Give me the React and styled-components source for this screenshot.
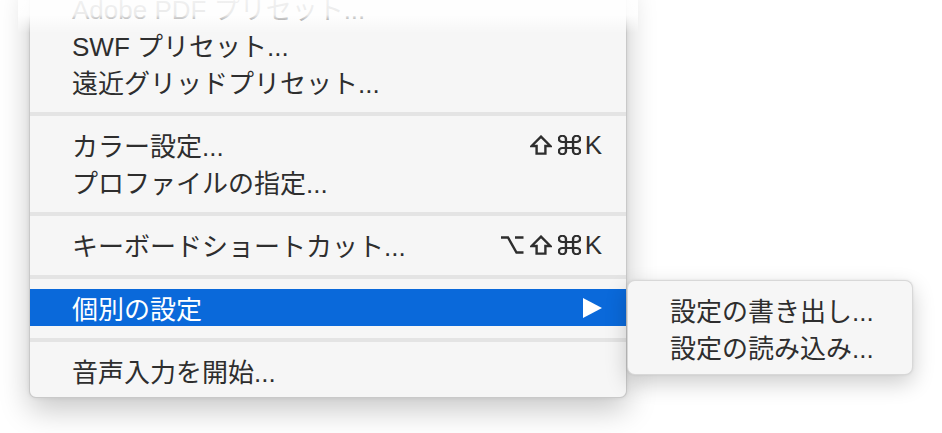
import React from "react";
import styled, { createGlobalStyle } from "styled-components";

const GlobalStyle = createGlobalStyle`
  html, body {
    margin: 0;
    padding: 0;
    background: #ffffff;
    overflow: hidden;
  }
  body {
    font-family: "Liberation Sans", "Noto Sans CJK JP", sans-serif;
  }
`;

// key glyphs drawn as small svgs so their size matches the mac menu font
const OptionKey = () => (
  <Glyph width="24" height="20" viewBox="0 0 24 20">
    <path d="M1 2.5H8L16.5 17.5H23.5M15 2.5H23.5" />
  </Glyph>
);

const ShiftKey = () => (
  <Glyph width="22" height="20" viewBox="0 0 22 20">
    <path d="M11 1.6L20.4 11H15.4V18.6H6.6V11H1.6Z" />
  </Glyph>
);

const CommandKey = () => (
  <Glyph width="23" height="20" viewBox="2.3 2.3 19.4 19.4" preserveAspectRatio="none">
    <path
      d="M15 6v12a3 3 0 1 0 3-3H6a3 3 0 1 0 3 3V6a3 3 0 1 0-3 3h12a3 3 0 1 0-3-3"
      strokeWidth="2"
    />
  </Glyph>
);

const glyphs = { opt: OptionKey, shift: ShiftKey, cmd: CommandKey };

const menuItems = [
  { label: "Adobe PDF プリセット..." },
  { label: "SWF プリセット..." },
  { label: "遠近グリッドプリセット..." },
  { separator: true },
  { label: "カラー設定...", keys: ["shift", "cmd", "K"] },
  { label: "プロファイルの指定..." },
  { separator: true },
  { label: "キーボードショートカット...", keys: ["opt", "shift", "cmd", "K"] },
  { separator: true },
  { label: "個別の設定", active: true, submenu: ["設定の書き出し...", "設定の読み込み..."] },
  { separator: true },
  { label: "音声入力を開始..." },
];

const App = () => {
  return (
    <>
      <GlobalStyle />
      <Stage>
        <Menu>
          {menuItems.map((item, i) =>
            item.separator ? (
              <Separator key={i} />
            ) : (
              <Item key={i} $active={item.active}>
                <Label>{item.label}</Label>
                {item.keys && (
                  <Keys>
                    {item.keys.map((k) => {
                      const G = glyphs[k];
                      return G ? <G key={k} /> : <Letter key={k}>{k}</Letter>;
                    })}
                  </Keys>
                )}
                {item.submenu && (
                  <>
                    <Arrow viewBox="0 0 19 20">
                      <polygon points="0,0 19,10 0,20" fill="#ffffff" />
                    </Arrow>
                    <SubMenu>
                      {item.submenu.map((s) => (
                        <SubItem key={s}>{s}</SubItem>
                      ))}
                    </SubMenu>
                  </>
                )}
              </Item>
            )
          )}
          <TopFade />
        </Menu>
      </Stage>
    </>
  );
};

const Stage = styled.div`
  width: 942px;
  height: 433px;
  padding-left: 29px;
  box-sizing: border-box;
  display: flex;
  align-items: flex-start;
`;

const Menu = styled.div`
  position: relative;
  margin-top: -20px;
  width: 598px;
  box-sizing: border-box;
  padding: 8px 0 8px;
  background: #f6f6f6;
  border: 1px solid rgba(0, 0, 0, 0.18);
  border-radius: 7px;
  box-shadow: 0 12px 30px rgba(0, 0, 0, 0.22), 0 0 4px rgba(0, 0, 0, 0.08);
`;

const TopFade = styled.div`
  position: absolute;
  left: -12px;
  right: -12px;
  top: 0;
  height: 58px;
  pointer-events: none;
  background: linear-gradient(
    to bottom,
    rgba(255, 255, 255, 1) 0px,
    rgba(255, 255, 255, 0.93) 20px,
    rgba(255, 255, 255, 0.9) 34px,
    rgba(255, 255, 255, 0) 52px
  );
`;

const Item = styled.div`
  position: relative;
  height: 37px;
  display: flex;
  align-items: center;
  padding: 0 24px 0 42px;
  font-size: 26px;
  color: ${(p) => (p.$active ? "#ffffff" : "#2e2e2e")};
  background: ${(p) => (p.$active ? "#0a69da" : "transparent")};
`;

const Label = styled.span`
  flex: 1;
  white-space: nowrap;
`;

const Keys = styled.span`
  display: flex;
  align-items: center;
  gap: 6px;
`;

const Glyph = styled.svg`
  fill: none;
  stroke: #2e2e2e;
  stroke-width: 2.4;
  stroke-linejoin: miter;
`;

const Letter = styled.span`
  font-size: 26px;
  line-height: 1;
  margin-left: -2px;
`;

const Arrow = styled.svg`
  width: 19px;
  height: 20px;
`;

const Separator = styled.div`
  height: 4px;
  margin: 12px 0 10px;
  background: #e4e4e4;
`;

const SubMenu = styled.div`
  position: absolute;
  left: calc(100% + 1px);
  top: -9px;
  width: 286px;
  box-sizing: border-box;
  padding: 10px 0 9px;
  background: #f6f6f6;
  border: 1px solid rgba(0, 0, 0, 0.12);
  border-radius: 8px;
  box-shadow: 0 8px 22px rgba(0, 0, 0, 0.2), 0 0 3px rgba(0, 0, 0, 0.08);
`;

const SubItem = styled.div`
  height: 37px;
  display: flex;
  align-items: center;
  padding-left: 42px;
  font-size: 26px;
  color: #2e2e2e;
  white-space: nowrap;
`;

export default App;
